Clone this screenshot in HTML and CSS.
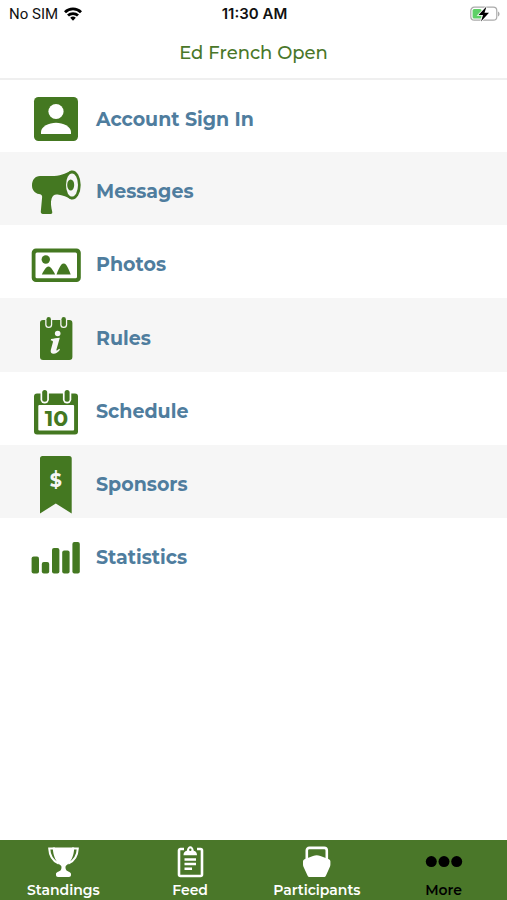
FILE: index.html
```html
<!DOCTYPE html>
<html lang="en">
<head>
    <meta charset="UTF-8">
    <meta name="viewport" content="width=device-width, initial-scale=1.0">
    <title>Ed French Open</title>
    <link rel="stylesheet" href="styles.css">
</head>
<body>
    <div class="status-bar">
        <div class="carrier">
            <span>No SIM</span>
            <svg class="wifi" viewBox="0 0 18 14" aria-hidden="true">
                <g fill="none" stroke="#000" stroke-width="2.8">
                    <path d="M1 5.200a11.300 11.300 0 0 1 16 0"/>
                    <path d="M4 8.600a7.100 7.100 0 0 1 10 0"/>
                </g>
                <path d="M9 13.800l-2.800-3a4 4 0 0 1 5.600 0z"/>
            </svg>
        </div>
        <div class="clock">11:30 AM</div>
        <div class="battery">
            <svg viewBox="0 0 30 16" aria-hidden="true">
                <rect x="0.8" y="1.2" width="26" height="13" rx="3.5" fill="#fff" stroke="#aaa" stroke-width="1.2"/>
                <path d="M28 5.500c2 .8 2 4.200 0 5z" fill="#aaa"/>
                <rect x="2.600" y="3" width="9" height="9.400" rx="1.500" fill="#5fd067"/>
                <path d="M16.500.5L8.500 9h4.500l-2 6.500 8-8.700h-4.500z" fill="#000" stroke="#fff" stroke-width="1.600" paint-order="stroke"/>
            </svg>
        </div>
    </div>

    <header class="header">
        <h1>Ed French Open</h1>
    </header>

    <main class="content">
        <ul class="menu">
            <li><a href="#account">
                <svg viewBox="0 0 50 60" aria-hidden="true">
                    <rect x="3" y="8" width="44" height="44" rx="4.500"/>
                    <circle class="cut" cx="25" cy="22.500" r="7.600"/>
                    <path class="cut" d="M10 45v-2c0-5.500 8-9.300 15-9.300S40 37.500 40 43v2z"/>
                </svg>
                Account Sign In
            </a></li>
            <li><a href="#messages">
                <svg viewBox="0 0 50 60" aria-hidden="true">
                    <path d="M40.500 8.500C34 12 29 14 20 14H9C4 14 1 18 1 23.500c0 4.500 3 8 7 8.500 3 .5 3.500 2 3 4.500L9.800 49.500c-.1 1.500.7 2.500 2 2.500h7.700c1.500 0 2-1 1.700-2.300-1-5-2-9-.5-13.500 1-3 3-4.200 6-3.700 5 .7 9.500 2.500 14 5z"/>
                    <ellipse cx="41.300" cy="23" rx="8.400" ry="14.600"/>
                    <ellipse class="cut" cx="41" cy="23" rx="6" ry="11.600"/>
                    <ellipse cx="39.700" cy="23" rx="3.500" ry="5.600"/>
                </svg>
                Messages
            </a></li>
            <li><a href="#photos">
                <svg viewBox="0 0 50 60" aria-hidden="true">
                    <path fill-rule="evenodd" d="M5 13.500h40.500a4.300 4.300 0 0 1 4.300 4.300v25a4.300 4.300 0 0 1-4.300 4.300H5a4.300 4.300 0 0 1-4.300-4.300v-25A4.300 4.300 0 0 1 5 13.500zM6 17.500a1.500 1.500 0 0 0-1.500 1.500v22.700A1.500 1.500 0 0 0 6 43.200h38.500a1.500 1.500 0 0 0 1.500-1.500V19a1.500 1.500 0 0 0-1.500-1.500z"/>
                    <circle cx="14.800" cy="24.500" r="4.200"/>
                    <path d="M10.800 39.500c1.500-3 3-5.500 4.500-7 1.500-1.300 3-1.300 4.300 0 1.600 1.500 3 4 4.600 7zM25.500 39.500c1.500-4 3-7.500 4.700-9.700 1.500-1.800 3.500-1.800 4.900 0 1.700 2.200 3.100 5.700 4.600 9.700z"/>
                </svg>
                Photos
            </a></li>
            <li><a href="#rules">
                <svg viewBox="0 0 50 60" aria-hidden="true">
                    <rect x="9" y="12" width="32.400" height="40" rx="3"/>
                    <rect class="cut" x="14.200" y="7" width="7" height="13" rx="3.500"/>
                    <rect class="cut" x="29.200" y="7" width="7" height="13" rx="3.500"/>
                    <rect x="15.500" y="9" width="4.400" height="9.800" rx="2.200"/>
                    <rect x="30.500" y="9" width="4.400" height="9.800" rx="2.200"/>
                    <circle class="cut" cx="26.700" cy="25.500" r="2.800"/>
                    <path class="cut" d="M20 31c2.800-.4 5.500-1 8.800-1.300l-3.400 12c-.3 1.400.8 1 2.800-1l.8 1c-2 2.800-4.200 4-6.300 4-2.600 0-3.400-1.800-2.900-3.800l2.100-7.700c.3-1.500-.4-1.700-2.100-1.800z"/>
                </svg>
                Rules
            </a></li>
            <li><a href="#schedule">
                <svg viewBox="0 0 50 60" aria-hidden="true">
                    <rect x="3" y="11.500" width="44" height="41" rx="3"/>
                    <rect class="cut" x="7.300" y="23" width="35.800" height="25.500" rx="1"/>
                    <rect class="cut" x="9.500" y="6" width="8.400" height="15.500" rx="4.200"/>
                    <rect class="cut" x="31.900" y="6" width="8.400" height="15.500" rx="4.200"/>
                    <rect x="11.200" y="8" width="5" height="11.800" rx="2.500"/>
                    <rect x="33.600" y="8" width="5" height="11.800" rx="2.500"/>
                    <text class="day" x="25.500" y="44">10</text>
                </svg>
                Schedule
            </a></li>
            <li><a href="#sponsors">
                <svg viewBox="0 0 50 60" aria-hidden="true">
                    <path d="M11.500 1h26.700a2.500 2.500 0 0 1 2.500 2.500v55L24.800 48.500 9 58.500v-55A2.500 2.500 0 0 1 11.500 1z"/>
                    <text class="dollar cut" x="24.800" y="32">$</text>
                </svg>
                Sponsors
            </a></li>
            <li><a href="#statistics">
                <svg viewBox="0 0 50 60" aria-hidden="true">
                    <rect x="0.600" y="28.600" width="7.400" height="17" rx="2"/>
                    <rect x="10.800" y="34" width="7.400" height="11.600" rx="2"/>
                    <rect x="21" y="20" width="7.400" height="25.600" rx="2"/>
                    <rect x="31.200" y="22.600" width="7.400" height="23" rx="2"/>
                    <rect x="41.400" y="14" width="7.400" height="31.600" rx="2"/>
                </svg>
                Statistics
            </a></li>
        </ul>
    </main>

    <nav class="tabs">
        <a href="#standings">
            <svg viewBox="0 0 40 32" aria-hidden="true">
                <path d="M9.800 1.500h21.400c-.2 9-3.500 15-8 18-1 .7-1 3 .2 4.800.8 1.200 4.600 1.700 4.600 3.700v1c0 1-.8 2-2 2H15c-1.200 0-2-1-2-2v-1c0-2 3.800-2.500 4.600-3.700 1.200-1.800 1.200-4.100.2-4.800-4.500-3-7.800-9-8-18z"/>
                <path d="M12 2.400H6.200c.3 7 3.600 12.600 9.500 15.300M29 2.400h5.800c-.3 7-3.600 12.600-9.500 15.300" fill="none" stroke="#fff" stroke-width="2"/>
            </svg>
            Standings
        </a>
        <a href="#feed">
            <svg viewBox="0 0 40 32" aria-hidden="true">
                <path d="M14 3h-3.500a1.500 1.500 0 0 0-1.500 1.500v24a1.500 1.500 0 0 0 1.500 1.500h20a1.500 1.500 0 0 0 1.500-1.500v-24a1.500 1.500 0 0 0-1.500-1.500H27" fill="none" stroke="#fff" stroke-width="2.600"/>
                <path fill-rule="evenodd" d="M13.500 9.200c0-2.500 1.200-4 3.300-4.400C17.300 2 18.500.3 20.300.3s3 1.700 3.500 4.500c2.100.4 3.200 1.900 3.200 4.400zM20.300 2.500a1.200 1.200 0 1 0 0 2.400 1.200 1.200 0 0 0 0-2.400z"/>
                <path d="M14.500 13.500H26M14.500 18H26M14.500 22.800h7.500" fill="none" stroke="#fff" stroke-width="2.400"/>
            </svg>
            Feed
        </a>
        <a href="#participants">
            <svg viewBox="0 0 40 32" aria-hidden="true">
                <path d="M9.800 14V4.500Q9.800 1.900 12.400 1.900h14.800q2.600 0 2.600 2.600V14" fill="none" stroke="#fff" stroke-width="2.600"/>
                <path d="M6 15.500c0-1.200.8-2 2-2.500l8-3q3.700-1.400 7.400 0l8 3c1.300.5 2 1.300 2 2.500v3c0 1-.3 1.800-.7 2.700L29 29.500c-.5 1.100-1.200 1.600-2.300 1.600H12.800c-1.100 0-1.800-.5-2.300-1.600L6.700 21.200c-.4-.9-.7-1.700-.7-2.700z"/>
            </svg>
            Participants
        </a>
        <a href="#more" class="active">
            <svg viewBox="0 0 40 32" aria-hidden="true">
                <circle cx="7.300" cy="15.600" r="5.500"/>
                <circle cx="20" cy="15.600" r="5.500"/>
                <circle cx="32.700" cy="15.600" r="5.500"/>
            </svg>
            More
        </a>
    </nav>
</body>
</html>
```

FILE: styles.css
```css
* {
    box-sizing: border-box;
}
body {
    display: flex;
    flex-direction: column;
    min-height: 100vh;
    margin: 0;
    background-color: #fff;
    font-family: Montserrat, Inter, sans-serif;
}
.status-bar {
    display: grid;
    grid-template-columns: 1fr auto 1fr;
    align-items: center;
    height: 27px;
    padding: 0 7px 0 9px;
    font-family: Roboto, Inter, sans-serif;
    font-size: 15px;
    color: #111;
}
.carrier {
    display: flex;
    align-items: center;
    gap: 6px;
}
.wifi {
    width: 18px;
    height: 14px;
}
.clock {
    font-family: Inter, sans-serif;
    font-weight: 600;
}
.battery {
    display: flex;
    justify-content: flex-end;
}
.battery svg {
    width: 30px;
    height: 16px;
}
.header {
    height: 53px;
    border-bottom: 2px solid #efefef;
    text-align: center;
}
h1 {
    margin: 0;
    font-size: 18px;
    font-weight: 500;
    line-height: 53px;
    color: #4a7729;
}
.content {
    flex: 1;
}
.menu {
    margin: 0;
    padding: 0;
    list-style: none;
}
.menu a {
    display: flex;
    align-items: center;
    gap: 15px;
    height: 73px;
    padding: 6px 31px 0;
    font-size: 19px;
    font-weight: 700;
    color: #4f7d9e;
    text-decoration: none;
}
.menu li:first-child a {
    height: 72px;
}
.menu li:nth-child(even) a {
    background-color: #f6f6f6;
}
.menu li:nth-child(4n) a {
    height: 74px;
}
.menu svg {
    flex: none;
    width: 50px;
    height: 60px;
    fill: #447821;
}
.menu .cut {
    fill: #fff;
}
.menu li:nth-child(even) .cut {
    fill: #f6f6f6;
}
.day {
    font-size: 22px;
    text-anchor: middle;
}
.dollar {
    font-size: 19px;
    text-anchor: middle;
}
.tabs {
    display: grid;
    grid-template-columns: repeat(4, 1fr);
    height: 60px;
    background-color: #4a7729;
}
.tabs a {
    display: flex;
    flex-direction: column;
    align-items: center;
    padding-top: 6px;
    font-size: 14px;
    font-weight: 600;
    line-height: 24px;
    color: #fff;
    text-decoration: none;
}
.tabs svg {
    width: 40px;
    height: 32px;
    fill: #fff;
}
.tabs .active {
    color: #000;
}
.tabs .active svg {
    fill: #000;
}
```
